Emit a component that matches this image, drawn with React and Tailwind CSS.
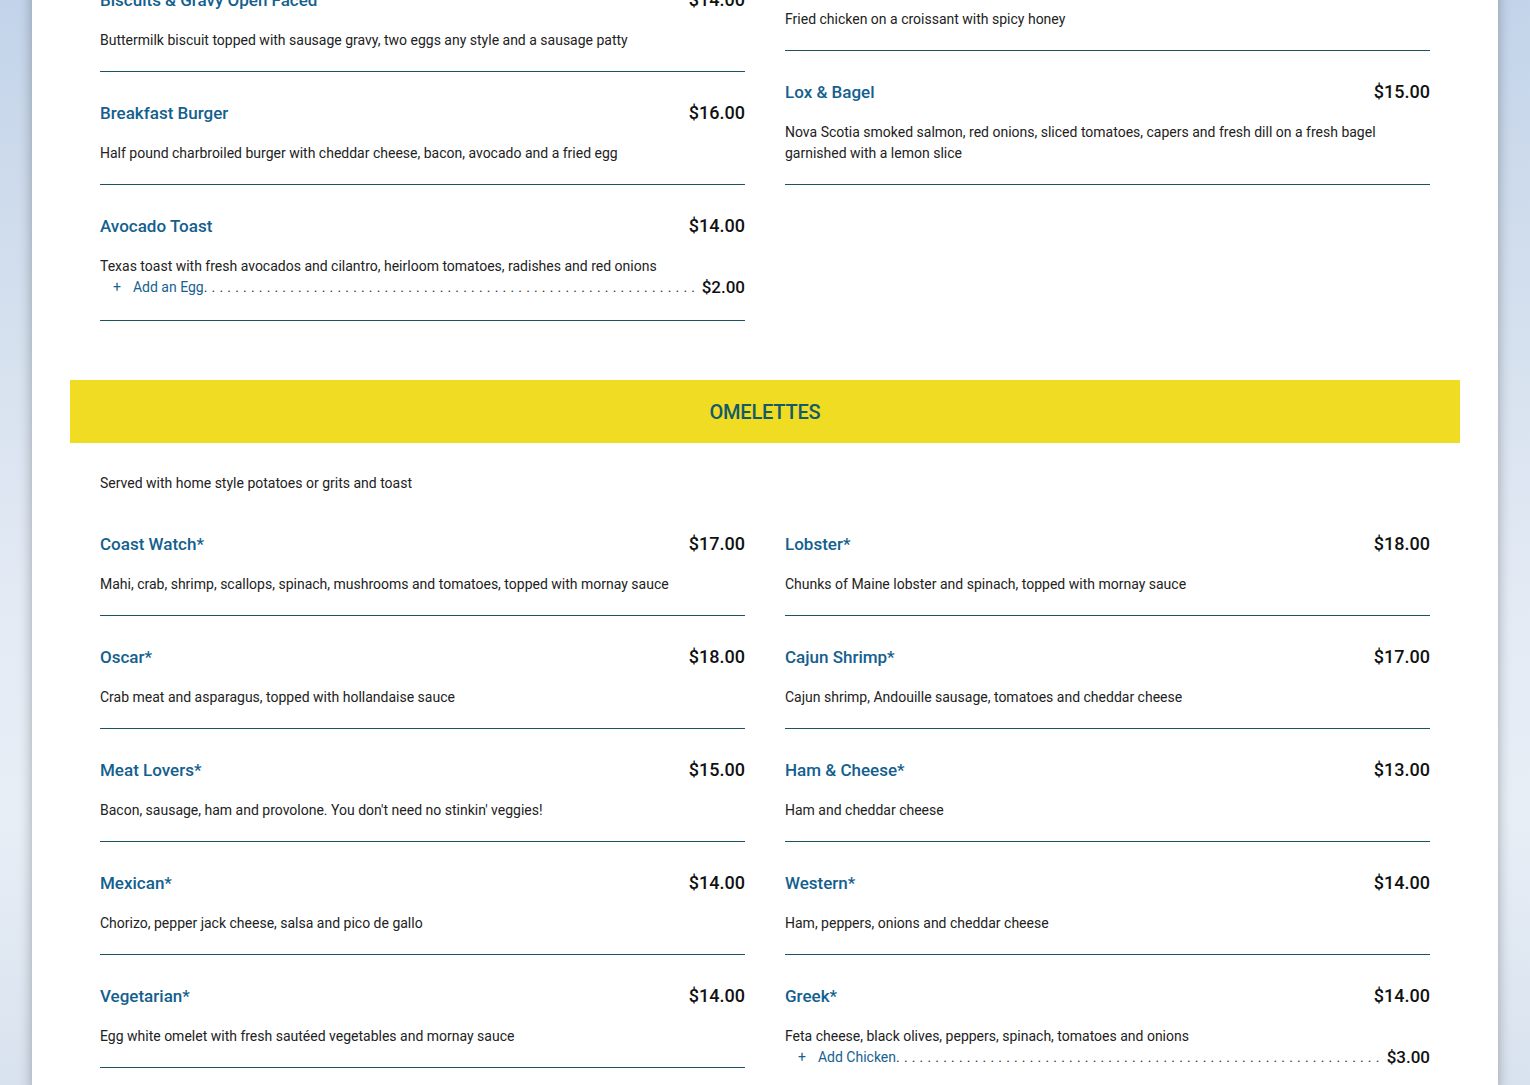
import React from "react";

const breakfastLeft = [
  {
    name: "Biscuits & Gravy Open Faced",
    price: "$14.00",
    desc: "Buttermilk biscuit topped with sausage gravy, two eggs any style and a sausage patty",
  },
  {
    name: "Breakfast Burger",
    price: "$16.00",
    desc: "Half pound charbroiled burger with cheddar cheese, bacon, avocado and a fried egg",
  },
  {
    name: "Avocado Toast",
    price: "$14.00",
    desc: "Texas toast with fresh avocados and cilantro, heirloom tomatoes, radishes and red onions",
    addon: { name: "Add an Egg", price: "$2.00" },
  },
];

const breakfastRight = [
  {
    name: "Chicken & Croissant",
    price: "$15.00",
    desc: "Fried chicken on a croissant with spicy honey",
  },
  {
    name: "Lox & Bagel",
    price: "$15.00",
    desc: "Nova Scotia smoked salmon, red onions, sliced tomatoes, capers and fresh dill on a fresh bagel garnished with a lemon slice",
  },
];

const omeletteLeft = [
  {
    name: "Coast Watch*",
    price: "$17.00",
    desc: "Mahi, crab, shrimp, scallops, spinach, mushrooms and tomatoes, topped with mornay sauce",
  },
  {
    name: "Oscar*",
    price: "$18.00",
    desc: "Crab meat and asparagus, topped with hollandaise sauce",
  },
  {
    name: "Meat Lovers*",
    price: "$15.00",
    desc: "Bacon, sausage, ham and provolone. You don't need no stinkin' veggies!",
  },
  {
    name: "Mexican*",
    price: "$14.00",
    desc: "Chorizo, pepper jack cheese, salsa and pico de gallo",
  },
  {
    name: "Vegetarian*",
    price: "$14.00",
    desc: "Egg white omelet with fresh sautéed vegetables and mornay sauce",
  },
];

const omeletteRight = [
  {
    name: "Lobster*",
    price: "$18.00",
    desc: "Chunks of Maine lobster and spinach, topped with mornay sauce",
  },
  {
    name: "Cajun Shrimp*",
    price: "$17.00",
    desc: "Cajun shrimp, Andouille sausage, tomatoes and cheddar cheese",
  },
  {
    name: "Ham & Cheese*",
    price: "$13.00",
    desc: "Ham and cheddar cheese",
  },
  {
    name: "Western*",
    price: "$14.00",
    desc: "Ham, peppers, onions and cheddar cheese",
  },
  {
    name: "Greek*",
    price: "$14.00",
    desc: "Feta cheese, black olives, peppers, spinach, tomatoes and onions",
    addon: { name: "Add Chicken", price: "$3.00" },
  },
];

const MenuItem = ({ item }) => (
  <div className="pt-[29px] pb-[20px] border-b border-[#1d5262]">
    <div className="flex items-center justify-between h-[24px]">
      <h3 className="text-[17px] font-medium text-[#13608e] leading-[24px]">
        {item.name}
      </h3>
      <span className="text-[18px] font-medium text-[#111] leading-[24px]">
        {item.price}
      </span>
    </div>
    <p className="mt-[18px] text-[14px] leading-[21px] text-[#222]">
      {item.desc}
    </p>
    {item.addon && (
      <div className="flex items-start h-[23px] pl-[13px] text-[14px] leading-[21px]">
        <span className="text-[#17628f]">+</span>
        <span className="ml-[12px] text-[#17628f] whitespace-nowrap">
          {item.addon.name}
        </span>
        <span className="flex-1 mr-[4px] overflow-hidden whitespace-nowrap text-[#333] tracking-[0.35px]">
          {". ".repeat(120)}
        </span>
        <span className="text-[17px] font-medium text-[#111] leading-[21px]">
          {item.addon.price}
        </span>
      </div>
    )}
  </div>
);

export default function App() {
  return (
    <div
      className="h-[1085px] overflow-hidden bg-[linear-gradient(180deg,#c3d4ea_0%,#cfdcec_20%,#e3eaf4_55%,#e8eef6_75%,#d8e2ee_100%)]"
      style={{ fontFamily: "Roboto, 'Noto Sans', sans-serif" }}
    >
      <div className="mx-auto w-[1466px] min-h-full bg-white shadow-[0_0_12px_rgba(0,0,0,0.3)]">
        {/* Breakfast (continued) */}
        <div className="px-[68px] -mt-[62px] grid grid-cols-2 gap-x-[40px] items-start">
          <div className="pt-[21px]">
            {breakfastLeft.map((item) => (
              <MenuItem key={item.name} item={item} />
            ))}
          </div>
          <div>
            {breakfastRight.map((item) => (
              <MenuItem key={item.name} item={item} />
            ))}
          </div>
        </div>

        {/* Omelettes */}
        <div className="mx-[38px] mt-[59px] h-[63px] bg-[#f0dc22] flex items-center justify-center">
          <h2 className="text-[20px] font-medium text-[#135a6b] tracking-[-0.2px]">
            OMELETTES
          </h2>
        </div>
        <p className="px-[68px] mt-[30px] text-[14px] leading-[21px] text-[#222]">
          Served with home style potatoes or grits and toast
        </p>
        <div className="px-[68px] mt-[9px] grid grid-cols-2 gap-x-[40px] items-start">
          <div>
            {omeletteLeft.map((item) => (
              <MenuItem key={item.name} item={item} />
            ))}
          </div>
          <div>
            {omeletteRight.map((item) => (
              <MenuItem key={item.name} item={item} />
            ))}
          </div>
        </div>
      </div>
    </div>
  );
}
